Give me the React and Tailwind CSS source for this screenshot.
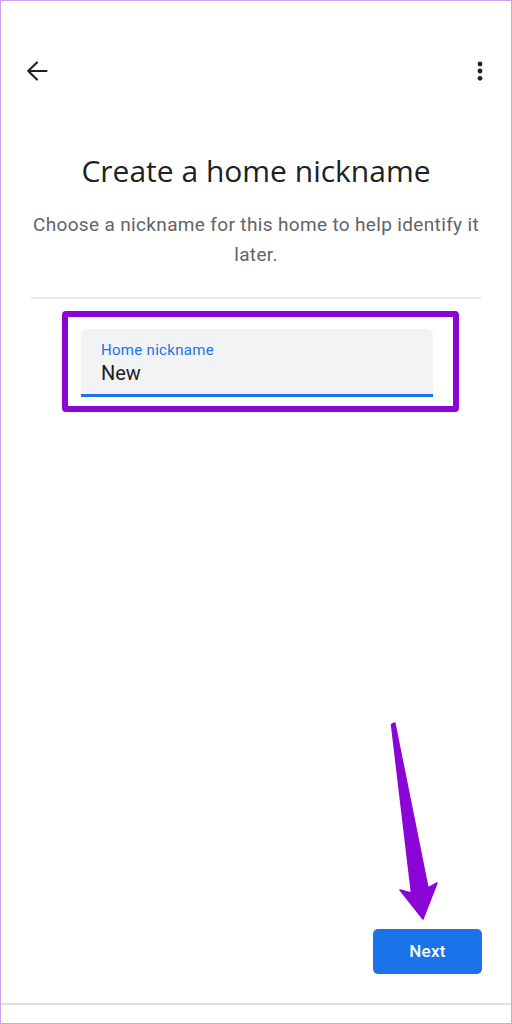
export default function App() {
  return (
    <div className="relative w-[512px] h-[1024px] bg-white border border-[#cfa3ec] flex flex-col overflow-hidden" style={{ fontFamily: 'Roboto, "Open Sans", sans-serif' }}>
      <div className="flex items-center justify-between pl-[24px] pr-[27px] pt-[58px] h-[82px]">
        <svg width="24" height="24" viewBox="0 0 24 24">
          <path d="M21.5 12H3.2M12 3.5L3.2 12L12 20.5" fill="none" stroke="#202124" strokeWidth="2.2" strokeLinecap="round" strokeLinejoin="round" />
        </svg>
        <svg width="8" height="24" viewBox="0 0 8 24">
          <circle cx="4" cy="5" r="2.4" fill="#202124" />
          <circle cx="4" cy="12" r="2.4" fill="#202124" />
          <circle cx="4" cy="19.3" r="2.4" fill="#202124" />
        </svg>
      </div>

      <h1 className="mt-[68px] text-center text-[30px] leading-[40px] text-[#202124]" style={{ fontFamily: '"Open Sans", sans-serif' }}>
        Create a home nickname
      </h1>
      <p className="mt-[19px] mx-[27px] text-center text-[19px] tracking-[0.35px] leading-[30px] text-[#5f6368]">
        Choose a nickname for this home to help identify it later.
      </p>
      <div className="mt-[27px] mx-[30px] h-[2px] bg-[#e3e5e8]" />

      <div className="mt-[12px] ml-[61px] w-[397px] border-[6px] border-[#8a05d6] rounded-[4px] pl-[13px] pt-[12px] pb-[9px] pr-[20px]">
        <div className="h-[68px] bg-[#f1f3f4] rounded-t-[6px] border-b-[3px] border-[#1a73e8] pl-[20px] pt-[12px]">
          <div className="text-[15px] tracking-[0.3px] leading-[18px] text-[#1a73e8]">Home nickname</div>
          <div className="mt-[2px] text-[20px] leading-[24px] text-[#202124]">New</div>
        </div>
      </div>

      <div className="flex-1" />

      <div className="flex justify-end pr-[29px]">
        <button className="w-[109px] h-[45px] rounded-[5px] bg-[#1a73e8] text-white text-[17px] tracking-[0.3px] font-medium">
          Next
        </button>
      </div>
      <div className="mt-[29px] h-[20px] border-t-2 border-[#e0e1e4] bg-white" />

      <svg className="absolute inset-0 pointer-events-none" width="512" height="1024" viewBox="0 0 512 1024">
        <polygon
          points="390.5,723.5 393.8,722 427,887 436,882 422,918 399,889 410.5,892"
          fill="#8a05d6"
          stroke="#8a05d6"
          strokeWidth="1.5"
          strokeLinejoin="round"
        />
      </svg>
    </div>
  );
}
